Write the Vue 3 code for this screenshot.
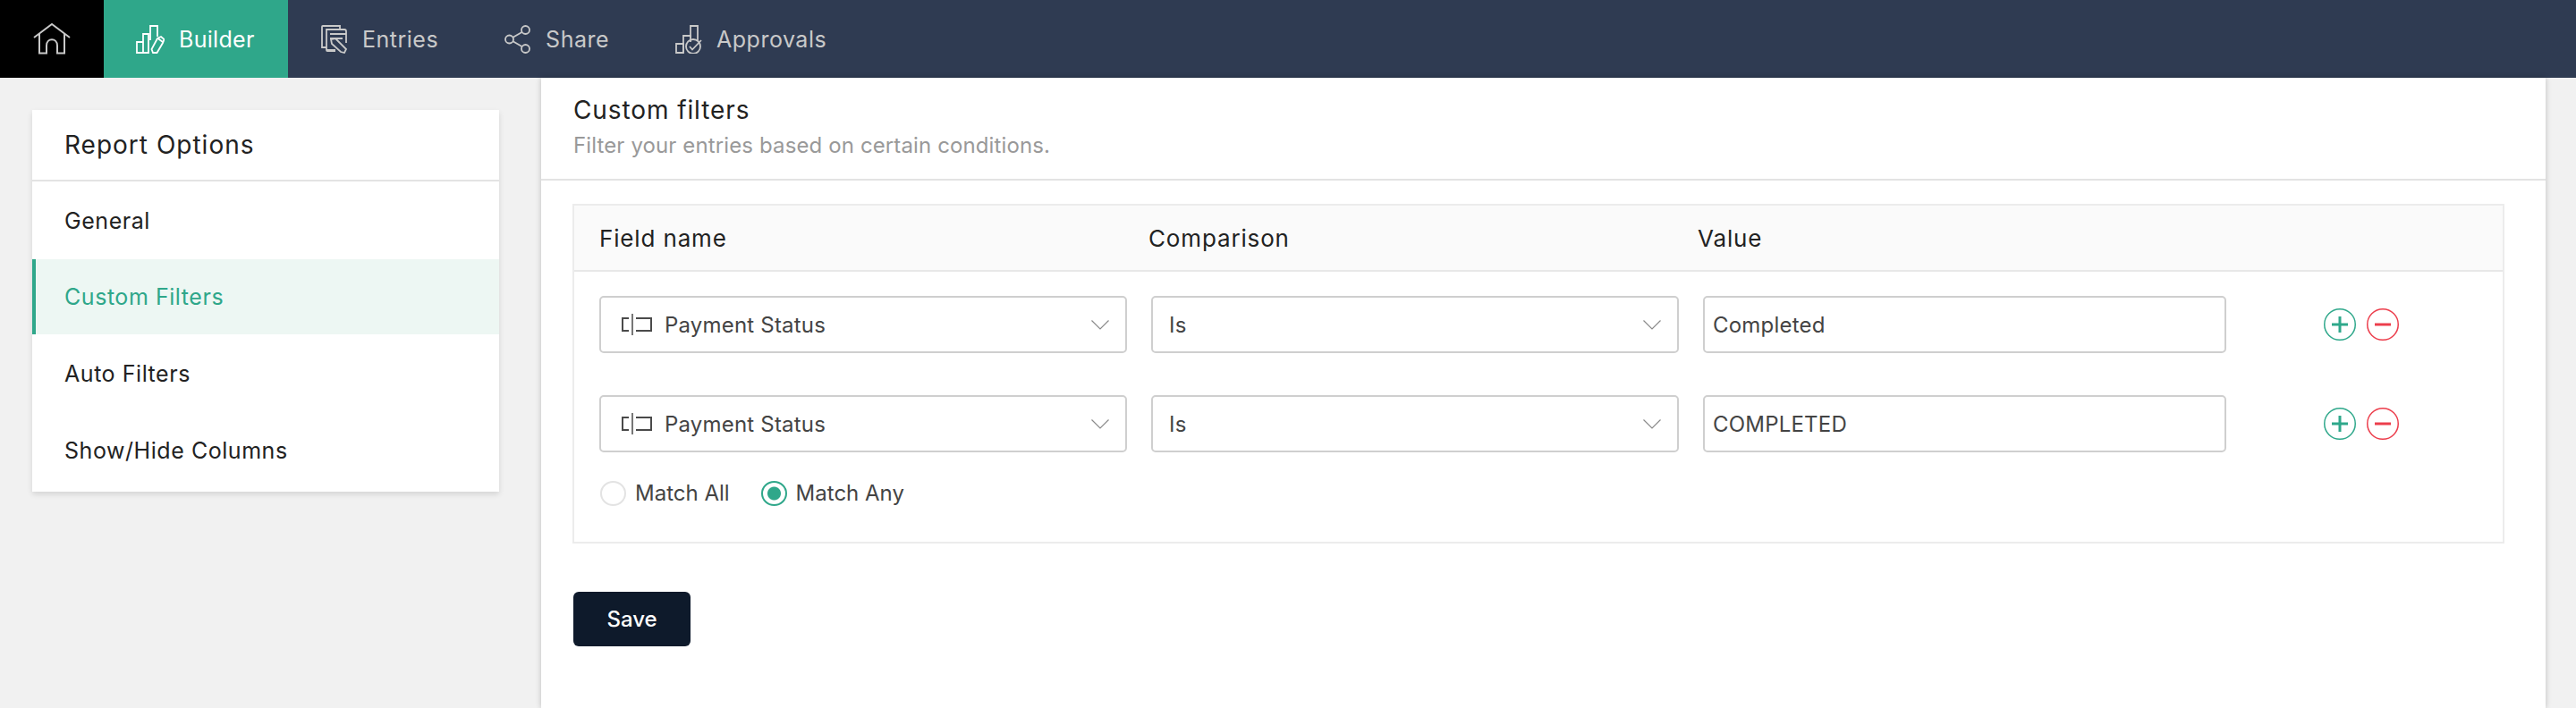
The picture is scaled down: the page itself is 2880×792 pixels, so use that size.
<script setup>
const menu = [
  { label: 'General', active: false },
  { label: 'Custom Filters', active: true },
  { label: 'Auto Filters', active: false },
  { label: 'Show/Hide Columns', active: false },
]
const rows = ['Completed', 'COMPLETED']
</script>

<template>
  <div class="page">
    <header class="nav">
      <a class="home">
        <svg width="42" height="36" viewBox="0 0 42 36" fill="none" stroke="#c9c9c9" stroke-width="2">
          <path d="M1 16 L21 1 L41 16" />
          <path d="M7 12 V33.500 H15 V25 C15 16 27 16 27 25 V33.500 H35 V12" />
        </svg>
      </a>
      <a class="tab tab-active">
        <svg width="32" height="32" viewBox="0 0 32 32" fill="none" stroke="#fff" stroke-width="1.800">
          <path d="M1 31 V19 H8 V31 Z M8 31 V10 H14 V31 H8" />
          <path d="M16 17 V1 H24 V13" />
          <path d="M19 31 L17.500 27 L24 15 L28 13 L31.500 16 L30 20 L23.500 31 Z" />
          <path d="M24.500 15 L30 19" />
        </svg>
        <span>Builder</span>
      </a>
      <a class="tab">
        <svg width="30" height="32" viewBox="0 0 30 32" fill="none" stroke="#c9c9c9" stroke-width="1.800">
          <path d="M6 25 H1 V2 Q1 1 2 1 H21 V5" />
          <path d="M6 25 V5 H26 Q28 5 28 7 V20" />
          <path d="M6 28 H16 M10 10 H28 M10 15 H24" />
          <path d="M6 25 V28 Q6 29 7 29 H16" />
          <path d="M11 16 L16 15 L28 27 L26 31 L22 30 L12 21 Z" />
        </svg>
        <span>Entries</span>
      </a>
      <a class="tab">
        <svg width="30" height="32" viewBox="0 0 30 32" fill="none" stroke="#c9c9c9" stroke-width="1.800">
          <circle cx="5.500" cy="16" r="4.500" />
          <circle cx="23.500" cy="5.500" r="4.500" />
          <circle cx="23.500" cy="26.500" r="4.500" />
          <path d="M9.500 13.800 L19.500 8 M9.500 18.200 L19.500 24" />
        </svg>
        <span>Share</span>
      </a>
      <a class="tab">
        <svg width="30" height="32" viewBox="0 0 30 32" fill="none" stroke="#c9c9c9" stroke-width="1.800">
          <path d="M1 21 H9 V31 H1 Z" />
          <path d="M9 31 V12 H17 V19" />
          <path d="M17 14 V1 H25 V18" />
          <circle cx="20" cy="24" r="8" />
          <path d="M16 24 L19 27.500 L29 17" />
        </svg>
        <span>Approvals</span>
      </a>
    </header>

    <main class="layout">
      <aside class="side">
        <section class="card">
          <h2 class="card-title">Report Options</h2>
          <ul class="menu">
            <li v-for="m in menu" :key="m.label" class="menu-item" :class="{ on: m.active }">{{ m.label }}</li>
          </ul>
        </section>
      </aside>

      <section class="panel">
        <div class="panel-head">
          <h1 class="panel-title">Custom filters</h1>
          <p class="panel-sub">Filter your entries based on certain conditions.</p>
        </div>

        <div class="panel-body">
          <div class="box">
            <div class="box-head">
              <span>Field name</span>
              <span>Comparison</span>
              <span>Value</span>
            </div>
            <div class="box-rows">
              <div v-for="value in rows" :key="value" class="row">
                <div class="field">
                  <svg class="field-icon" width="34" height="24" viewBox="0 0 34 24" fill="none" stroke="#4a4a4a" stroke-width="2">
                    <path d="M8 5 H1 V19 H8" />
                    <path d="M12 0 V24" stroke-width="1.500" />
                    <path d="M16 5 H33 V19 H16" />
                  </svg>
                  <span class="field-text">Payment Status</span>
                  <svg class="chev" width="20" height="11" viewBox="0 0 20 11" fill="none" stroke="#8a8a8a" stroke-width="1.200">
                    <path d="M0.500 0.500 L10 10 L19.500 0.500" />
                  </svg>
                </div>
                <div class="field field-plain">
                  <span class="field-text">Is</span>
                  <svg class="chev" width="20" height="11" viewBox="0 0 20 11" fill="none" stroke="#8a8a8a" stroke-width="1.200">
                    <path d="M0.500 0.500 L10 10 L19.500 0.500" />
                  </svg>
                </div>
                <div class="field field-value">
                  <span class="field-text">{{ value }}</span>
                </div>
                <div class="actions">
                  <svg width="36" height="36" viewBox="0 0 36 36" fill="none">
                    <circle cx="18" cy="18" r="17.250" stroke="#2fa88b" stroke-width="1.500" />
                    <path d="M18 9 V27 M9 18 H27" stroke="#2fa88b" stroke-width="3" />
                  </svg>
                  <svg width="36" height="36" viewBox="0 0 36 36" fill="none">
                    <circle cx="18" cy="18" r="17.250" stroke="#ec3e4c" stroke-width="1.500" />
                    <path d="M9 18 H27" stroke="#ec3e4c" stroke-width="3" />
                  </svg>
                </div>
              </div>
            </div>
            <div class="match">
              <label class="radio"><span class="dot"></span>Match All</label>
              <label class="radio"><span class="dot dot-on"></span>Match Any</label>
            </div>
          </div>
          <button class="save" type="button">Save</button>
        </div>
      </section>
    </main>
  </div>
</template>

<style>
html, body { margin: 0; background: #f1f1f1; }
</style>

<style scoped>
.page {
  width: 2880px;
  height: 792px;
  overflow: hidden;
  background: #f1f1f1;
  font-family: Inter, "Liberation Sans", sans-serif;
  color: #222;
}
.nav {
  display: flex;
  height: 87px;
  background: #2f3b52;
}
.home {
  width: 116px;
  background: #000;
  display: flex;
  align-items: center;
  justify-content: center;
}
.tab {
  display: flex;
  align-items: center;
  gap: 16px;
  height: 87px;
  padding: 0 37px;
  color: #c9c9c9;
  font-size: 25px;
  letter-spacing: 0.5px;
}
.tab-active {
  background: #2fa78a;
  color: #fff;
  width: 206px;
  box-sizing: border-box;
  padding: 0 0 0 36px;
  letter-spacing: 0.3px;
}
.layout {
  display: flex;
  height: 705px;
}
.side {
  width: 605px;
  box-sizing: border-box;
  padding: 36px 47px 0 36px;
}
.card {
  background: #fff;
  box-shadow: 0 3px 6px rgba(0, 0, 0, 0.12);
}
.card-title {
  margin: 0;
  height: 80px;
  line-height: 79px;
  padding-left: 36px;
  font-size: 28px;
  font-weight: 400;
  letter-spacing: 1px;
  border-bottom: 2px solid #e3e3e3;
  box-sizing: border-box;
  color: #222;
}
.menu {
  list-style: none;
  margin: 0;
  padding: 0;
}
.menu-item {
  height: 88px;
  line-height: 88px;
  padding-left: 36px;
  font-size: 25px;
  letter-spacing: 0.55px;
  color: #222;
}
.menu-item:first-child {
  height: 87px;
  line-height: 89px;
}
.menu-item:last-child {
  line-height: 84px;
}
.menu-item.on {
  height: 84px;
  line-height: 84px;
  padding-left: 32px;
  background: #edf7f3;
  border-left: 4px solid #2fa78a;
  color: #2fa78a;
}
.panel {
  width: 2241px;
  background: #fff;
  box-shadow: 0 0 6px rgba(0, 0, 0, 0.22);
}
.panel-head {
  height: 115px;
  box-sizing: border-box;
  padding: 16px 36px 0;
  border-bottom: 2px solid #e3e3e3;
}
.panel-title {
  margin: 0;
  font-size: 28px;
  font-weight: 400;
  line-height: 40px;
  letter-spacing: 0.9px;
  color: #222;
}
.panel-sub {
  margin: 2px 0 0;
  font-size: 24px;
  line-height: 36px;
  letter-spacing: 0.12px;
  color: #999;
}
.panel-body {
  padding: 26px 46px 0 35px;
}
.box {
  height: 380px;
  box-sizing: border-box;
  border: 2px solid #ececec;
}
.box-head {
  display: grid;
  grid-template-columns: 614px 614px 1fr;
  height: 74px;
  box-sizing: border-box;
  padding-left: 28px;
  align-items: center;
  background: #fafafa;
  border-bottom: 2px solid #e8e8e8;
  font-size: 26px;
  letter-spacing: 0.85px;
  color: #222;
}
.box-rows {
  display: flex;
  flex-direction: column;
  gap: 47px;
  padding: 27px 0 0 28px;
}
.row {
  display: grid;
  grid-template-columns: 590px 590px 585px auto;
  column-gap: 27px;
  align-items: center;
}
.field {
  height: 64px;
  box-sizing: border-box;
  border: 2px solid #cfcfcf;
  border-radius: 5px;
  display: flex;
  align-items: center;
  padding: 0 18px 0 23px;
  background: #fff;
}
.field-plain { padding-left: 18px; }
.field-value { padding-left: 9px; }
.field-icon { margin-right: 14px; flex: none; }
.field-text {
  font-size: 24px;
  letter-spacing: 0.2px;
  color: #444;
  flex: 1;
}
.actions {
  margin-left: 82px;
  display: flex;
  gap: 12px;
}
.match {
  display: flex;
  gap: 35px;
  padding: 31px 0 0 29px;
}
.radio {
  display: flex;
  align-items: center;
  gap: 10px;
  font-size: 24px;
  color: #444;
}
.dot {
  width: 29px;
  height: 28px;
  box-sizing: border-box;
  border: 2px solid #e3e3e3;
  border-radius: 50%;
  background: #fff;
}
.dot-on {
  border-color: #2fa78a;
  background: radial-gradient(circle, #2fa78a 0 7px, #fff 8px);
}
.save {
  display: block;
  margin: 54px 0 0 1px;
  width: 131px;
  height: 61px;
  border: 0;
  border-radius: 6px;
  background: #0e1a2b;
  color: #fff;
  font-family: inherit;
  font-size: 24px;
  font-weight: 500;
}
</style>
